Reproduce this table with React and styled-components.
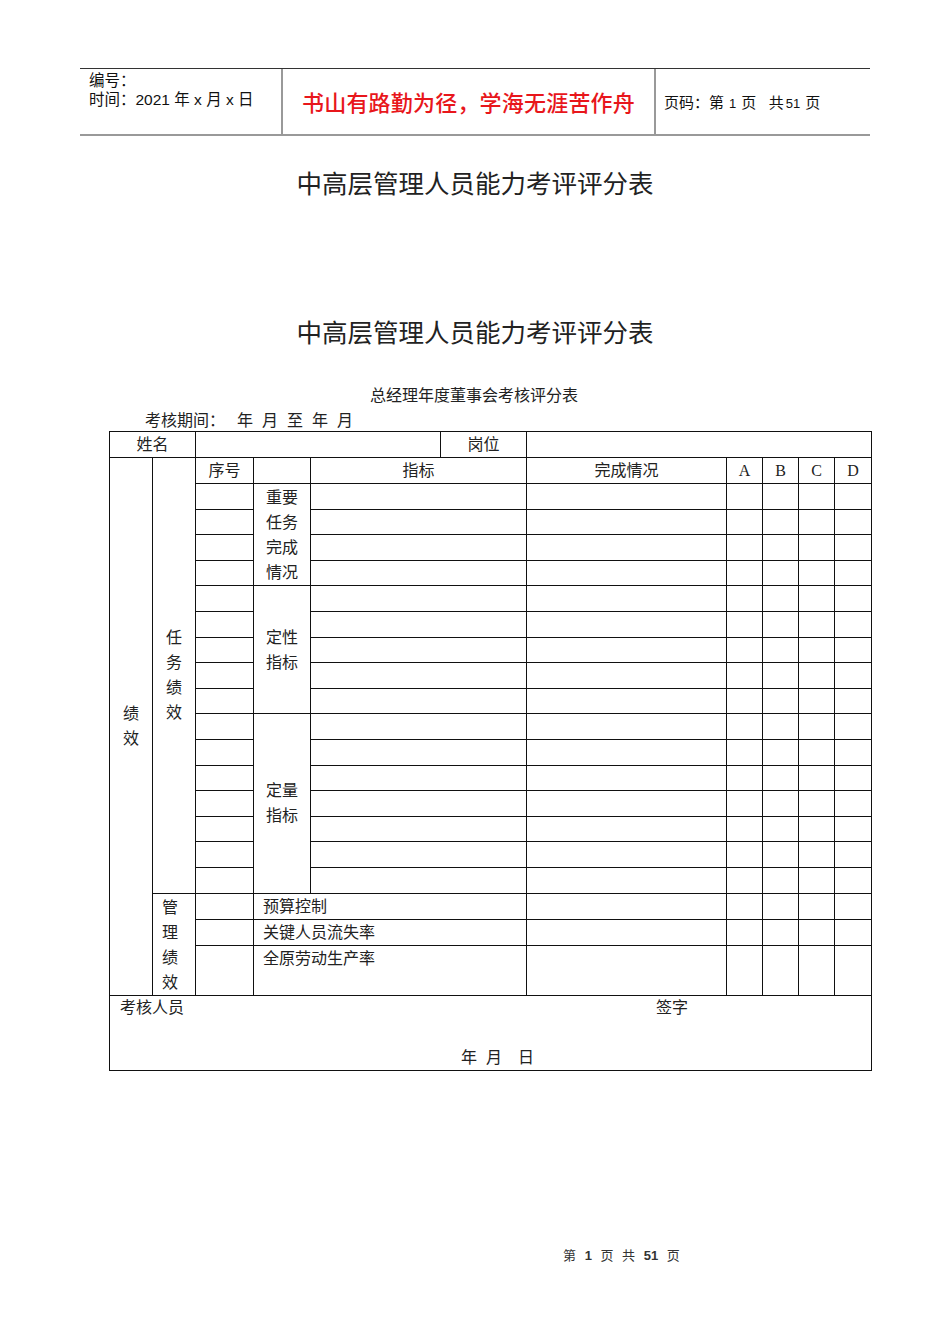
import React from "react";
import styled, { createGlobalStyle } from "styled-components";

const GlobalStyle = createGlobalStyle`
  html, body {
    margin: 0;
    padding: 0;
    background: #fff;
  }
  body {
    font-family: "Noto Sans CJK SC", "Noto Sans", sans-serif;
    color: #222;
  }
`;

const SERIF = `"Liberation Serif", "Noto Sans CJK SC", serif`;
const SANS = `"Liberation Sans", "Noto Sans CJK SC", sans-serif`;

const Page = styled.div`
  width: 950px;
  height: 1344px;
  padding-top: 68px;
  box-sizing: border-box;
  overflow: hidden;
`;

/* page header - start */
const Header = styled.div`
  margin: 0 80px;
  height: 68px;
  display: grid;
  grid-template-columns: 201px 373px 1fr;
  border-top: 1px solid #333;
  border-bottom: 2px solid #999;
  box-sizing: border-box;
  font-family: ${SANS};
`;

const HeaderCell = styled.div`
  display: flex;
  flex-direction: column;
  justify-content: ${(p) => p.$justify || "center"};
  align-items: ${(p) => p.$align || "flex-start"};
  padding: ${(p) => p.$pad || "0"};
  border-left: ${(p) => (p.$divider ? "2px solid #999" : "none")};
  font-size: ${(p) => p.$size || "15px"};
  line-height: 19px;
  color: #111;
`;

const Motto = styled.div`
  color: #e8161b;
  font-size: 22px;
  font-weight: 500;
  letter-spacing: 0.2px;
  line-height: 28px;
  margin-top: 5px;
`;

const Num = styled.span`
  font-size: 13px;
  margin: 0 5px;
`;
/* page header - end */

const Title = styled.h1`
  margin: ${(p) => p.$mt} 0 0;
  font-family: ${SERIF};
  font-weight: 400;
  font-size: 25.5px;
  line-height: 36px;
  text-align: center;
  color: #222;
`;

const SubTitle = styled.div`
  margin-top: 34px;
  text-align: center;
  padding-right: 2px;
  font-family: ${SERIF};
  font-size: 16px;
  line-height: 20px;
`;

const Period = styled.div`
  margin: 5px 0 0 145px;
  display: flex;
  gap: 9px;
  font-family: ${SERIF};
  font-size: 16px;
  line-height: 20px;
  & > span:first-child {
    margin-right: 3px;
  }
`;

/* score table - start */
const Table = styled.table`
  margin-left: 109px;
  width: 762px;
  border-collapse: collapse;
  table-layout: fixed;
  font-family: ${SERIF};
  font-size: 16px;
  color: #222;
`;

const Row = styled.tr`
  height: ${(p) => p.$h || "25.6px"};
`;

const Cell = styled.td`
  border: 1px solid #111;
  padding: ${(p) => p.$pad || "0"};
  text-align: ${(p) => p.$align || "center"};
  vertical-align: ${(p) => p.$valign || "middle"};
  line-height: 24px;
`;

const Lines = styled.div`
  display: flex;
  flex-direction: column;
  align-items: ${(p) => (p.$left ? "flex-start" : "center")};
  padding-left: ${(p) => (p.$left ? "9px" : "0")};
  line-height: 25px;
`;

const SignBox = styled.div`
  height: 74px;
  display: grid;
  grid-template-columns: 536px 1fr;
  grid-template-rows: 24px 1fr;
  padding-left: 10px;
  text-align: left;
`;

const DateLine = styled.div`
  grid-column: 1 / -1;
  align-self: end;
  padding-left: 341px;
  display: flex;
  gap: 9px;
  & > span:last-child {
    margin-left: 7px;
  }
`;
/* score table - end */

const Footer = styled.div`
  margin-top: 174px;
  padding-left: 563px;
  font-family: "Liberation Sans", "Noto Sans CJK SC", sans-serif;
  font-size: 13px;
  color: #333;
  word-spacing: 5px;
  & b {
    font-weight: 700;
  }
`;

const colWidths = [43, 43, 58, 57, 130, 86, 200, 36, 36, 36, 37];

const categories = {
  0: { span: 4, lines: ["重要", "任务", "完成", "情况"] },
  4: { span: 5, lines: ["定性", "指标"] },
  9: { span: 7, lines: ["定量", "指标"] },
};

const mgmtRows = [
  { label: "预算控制", h: "26px" },
  { label: "关键人员流失率", h: "26px" },
  { label: "全原劳动生产率", h: "49px" },
];

const Grades = () => (
  <>
    <Cell />
    <Cell />
    <Cell />
    <Cell />
  </>
);

const Stack = ({ lines, left }) => (
  <Lines $left={left}>
    {lines.map((l, i) => (
      <span key={i}>{l}</span>
    ))}
  </Lines>
);

export default function App() {
  const dataRows = Array.from({ length: 16 }, (_, i) => i);

  return (
    <Page>
      <GlobalStyle />
      <Header>
        <HeaderCell $justify="flex-start" $pad="2px 9px" $size="15.5px">
          <div>编号：</div>
          <div>时间：2021 年 x 月 x 日</div>
        </HeaderCell>
        <HeaderCell $divider $align="center">
          <Motto>书山有路勤为径，学海无涯苦作舟</Motto>
        </HeaderCell>
        <HeaderCell $divider $pad="3px 0 0 8px">
          <div>
            页码：第<Num>1</Num>页&nbsp;&nbsp;&nbsp;共<Num style={{ marginLeft: 2 }}>51</Num>页
          </div>
        </HeaderCell>
      </Header>

      <Title $mt="31px">中高层管理人员能力考评评分表</Title>
      <Title $mt="113px">中高层管理人员能力考评评分表</Title>

      <SubTitle>总经理年度董事会考核评分表</SubTitle>
      <Period>
        <span>考核期间：</span>
        <span>年</span>
        <span>月</span>
        <span>至</span>
        <span>年</span>
        <span>月</span>
      </Period>

      <Table>
        <colgroup>
          {colWidths.map((w, i) => (
            <col key={i} style={{ width: w }} />
          ))}
        </colgroup>
        <tbody>
          <Row $h="26px">
            <Cell colSpan={2}>姓名</Cell>
            <Cell colSpan={3} />
            <Cell>岗位</Cell>
            <Cell colSpan={5} />
          </Row>
          <Row $h="26px">
            <Cell rowSpan={20}>
              <Stack lines={["绩", "效"]} />
            </Cell>
            <Cell rowSpan={17}>
              <Stack lines={["任", "务", "绩", "效"]} />
            </Cell>
            <Cell>序号</Cell>
            <Cell />
            <Cell colSpan={2}>指标</Cell>
            <Cell>完成情况</Cell>
            <Cell>A</Cell>
            <Cell>B</Cell>
            <Cell>C</Cell>
            <Cell>D</Cell>
          </Row>
          {dataRows.map((i) => (
            <Row key={i}>
              <Cell />
              {categories[i] && (
                <Cell rowSpan={categories[i].span}>
                  <Stack lines={categories[i].lines} />
                </Cell>
              )}
              <Cell colSpan={2} />
              <Cell />
              <Grades />
            </Row>
          ))}
          {mgmtRows.map((r, i) => (
            <Row key={r.label} $h={r.h}>
              {i === 0 && (
                <Cell rowSpan={3} $valign="top" $pad="1px 0 0 0">
                  <Stack left lines={["管", "理", "绩", "效"]} />
                </Cell>
              )}
              <Cell />
              <Cell colSpan={3} $align="left" $valign="top" $pad="1px 0 0 9px">
                {r.label}
              </Cell>
              <Cell />
              <Grades />
            </Row>
          ))}
          <Row $h="75px">
            <Cell colSpan={11} $valign="top">
              <SignBox>
                <span>考核人员</span>
                <span>签字</span>
                <DateLine>
                  <span>年</span>
                  <span>月</span>
                  <span>日</span>
                </DateLine>
              </SignBox>
            </Cell>
          </Row>
        </tbody>
      </Table>

      <Footer>
        第 <b>1</b> 页 共 <b>51</b> 页
      </Footer>
    </Page>
  );
}
